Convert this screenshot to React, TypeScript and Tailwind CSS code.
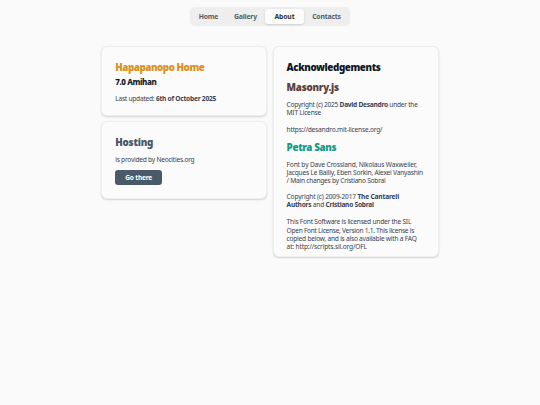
import type { ReactNode } from "react";
import clsx from "clsx";

const tabs = [
  { name: "Home", className: "w-[35px]" },
  { name: "Gallery", className: "w-[39px]" },
  { name: "About", className: "w-[39px] rounded-[3px] bg-[#fcfcfc] text-[#333333] shadow-sm" },
  { name: "Contacts", className: "w-[45px]" },
];

const heading = "text-[9.8px] font-black leading-[13px]";

function Card({ className, children }: { className?: string; children: ReactNode }) {
  return (
    <section
      className={clsx(
        "rounded-[6px] border border-[#eeeeef] bg-[#fbfbfb] px-[13px] shadow-[0_1px_2px_rgba(0,0,0,0.16)]",
        className
      )}
    >
      {children}
    </section>
  );
}

function Line({ className, children }: { className?: string; children: ReactNode }) {
  return <span className={clsx("block whitespace-nowrap", className)}>{children}</span>;
}

export default function App() {
  return (
    <div className="min-h-screen bg-[#fafafa] pt-[7px] font-['Noto_Sans',sans-serif] text-[6.6px] leading-[8.4px] tracking-[-0.2px] text-[#374151]">
      <nav className="mx-auto flex h-[19px] w-[160px] items-center justify-center rounded-[5px] bg-[#eeeeee] text-[6.8px] font-bold tracking-[-0.15px] text-[#555b63]">
        {tabs.map((tab) => (
          <a key={tab.name} className={clsx("flex h-[15px] items-center justify-center pt-px", tab.className)}>
            {tab.name}
          </a>
        ))}
      </nav>

      <main className="ml-[101px] mt-[20px] flex items-start gap-[6px]">
        <div className="flex w-[166px] flex-col gap-[5px]">
          <Card className="h-[70px] pl-[13.2px] pt-[14px]">
            <h1 className={clsx(heading, "tracking-[-0.45px] text-[#d9921c]")}>Hapapanopo Home</h1>
            <h2 className="mt-[1.5px] text-[8px] font-extrabold leading-[11px] tracking-[-0.4px] text-[#111827]">7.0 Amihan</h2>
            <p className="mt-[8px]">
              <Line className="tracking-[-0.23px]">
                Last updated: <b>6th of October 2025</b>
              </Line>
            </p>
          </Card>
          <Card className="h-[78px] pl-[13.2px] pt-[14px]">
            <h1 className={clsx(heading, "tracking-[-0.2px] text-[#475569]")}>Hosting</h1>
            <p className="mt-[7px]">
              <Line className="tracking-[-0.23px]">is provided by Neocities.org</Line>
            </p>
            <a className="mt-[6px] flex h-[15px] w-[47px] items-center justify-center rounded-[3px] bg-[#4a5a6a] pt-px font-bold text-white">
              Go there
            </a>
          </Card>
        </div>

        <Card className="h-[211px] w-[166px] pl-[12.6px] pt-[14px]">
          <h1 className={clsx(heading, "tracking-[-0.4px] text-[#111827]")}>Acknowledgements</h1>
          <h2 className={clsx(heading, "mt-[7px] tracking-[-0.25px] text-[#5d4037]")}>Masonry.js</h2>
          <p className="mt-[7px]">
            <Line className="tracking-[-0.25px]">
              Copyright (c) 2025 <b>David Desandro</b> under the
            </Line>
            <Line>MIT License</Line>
          </p>
          <p className="mt-[8.4px]">
            <Line>https://desandro.mit-license.org/</Line>
          </p>
          <h2 className={clsx(heading, "mt-[6px] tracking-[-0.35px] text-[#169b84]")}>Petra Sans</h2>
          <p className="mt-[7px]">
            <Line className="tracking-[-0.16px]">Font by Dave Crossland, Nikolaus Waxweiler,</Line>
            <Line>Jacques Le Bailly, Eben Sorkin, Alexei Vanyashin</Line>
            <Line className="tracking-[-0.24px]">/ Main changes by Cristiano Sobral</Line>
          </p>
          <p className="mt-[7px]">
            <Line className="tracking-[-0.17px]">
              Copyright (c) 2009-2017 <b>The Cantarell</b>
            </Line>
            <Line className="tracking-[-0.23px]">
              <b>Authors</b> and <b>Cristiano Sobral</b>
            </Line>
          </p>
          <p className="mt-[8.6px]">
            <Line className="tracking-[-0.22px]">This Font Software is licensed under the SIL</Line>
            <Line className="tracking-[-0.28px]">Open Font License, Version 1.1. This license is</Line>
            <Line className="tracking-[-0.23px]">copied below, and is also available with a FAQ</Line>
            <Line className="tracking-[-0.15px]">at: http://scripts.sil.org/OFL</Line>
          </p>
        </Card>
      </main>
    </div>
  );
}
